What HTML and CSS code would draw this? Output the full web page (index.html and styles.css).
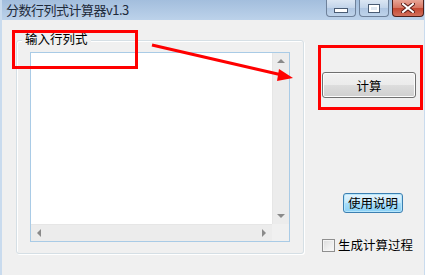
FILE: index.html
```html
<!DOCTYPE html>
<html lang="zh-CN">
<head>
  <meta charset="UTF-8" />
  <title>分数行列式计算器v1.3</title>
  <link rel="stylesheet" href="styles.css">
</head>
<body>
  <div class="window">
    <div class="titlebar">
      <span class="title">分数行列式计算器v1.3</span>
      <div class="caption-btns">
        <span class="cbtn min"><i></i></span>
        <span class="cbtn max"><i></i></span>
        <span class="cbtn close">
          <svg width="14" height="10" viewBox="0 0 14 10">
            <path d="M2 1 L12 9 M12 1 L2 9" stroke="#5a1e18" stroke-width="4" stroke-linecap="square"/>
            <path d="M2 1 L12 9 M12 1 L2 9" stroke="#fff" stroke-width="2" stroke-linecap="square"/>
          </svg>
        </span>
      </div>
    </div>

    <div class="client">
      <div class="group">
        <span class="group-label">输入行列式</span>
        <div class="editbox">
          <div class="edit-area"></div>
          <div class="vscroll">
            <span class="arr up"></span>
            <span class="arr down"></span>
          </div>
          <div class="hscroll">
            <span class="arr left"></span>
            <span class="arr right"></span>
          </div>
          <div class="corner"></div>
        </div>
      </div>

      <div class="side">
        <button class="btn calc">计算</button>
        <button class="btn help">使用说明</button>
        <label class="check"><span class="box"></span>生成计算过程</label>
      </div>
    </div>

    <!-- annotations drawn over the screenshot -->
    <div class="mark mark-input"></div>
    <div class="mark mark-calc"></div>
    <svg class="arrow" width="425" height="275" viewBox="0 0 425 275">
      <line x1="152" y1="45" x2="282" y2="75" stroke="#f00" stroke-width="3"/>
      <polygon points="293,78 279,69 277,81" fill="#f00"/>
    </svg>
  </div>
</body>
</html>
```

FILE: styles.css
```css
* { box-sizing: border-box; }
body { margin: 0; font-family: "Noto Sans CJK SC", "Liberation Sans", sans-serif; font-size: 12px; color: #000; }

.window { position: relative; width: 425px; height: 275px; background: #f0f0f0; border-left: 2px solid #c9dbee; border-right: 1px solid #c9dbee; overflow: hidden; }

.titlebar { height: 20px; display: flex; justify-content: space-between; align-items: flex-start; background: linear-gradient(#a3bedd, #bcd2ea); margin-left: -2px; margin-right: -1px; }
.title { font-size: 13px; line-height: 20px; padding-left: 6px; color: #1e2a3a; letter-spacing: -0.5px; }
.caption-btns { display: flex; gap: 3px; padding-right: 1px; }
.cbtn { width: 30px; height: 17px; border: 1px solid #6e819a; border-top: none; border-radius: 0 0 4px 4px; display: flex; align-items: center; justify-content: center; background: linear-gradient(#dbe6f3, #c2d4ea 50%, #afc6e2 51%, #bed3ea); }
.cbtn.close { width: 32px; border-color: #4c1f1a; background: linear-gradient(#e8a596, #d67461 50%, #c54731 51%, #d2705c); }
.cbtn.min i { width: 14px; height: 5px; background: #fff; border: 1px solid #4a5c74; margin-top: 4px; }
.cbtn.max i { width: 12px; height: 9px; border: 1px solid #4a5c74; background: #dfe7f1; box-shadow: inset 0 0 0 2px #fff; }

.client { display: flex; }

.group { position: relative; margin: 20px 0 0 14px; width: 288px; height: 214px; border: 1px solid #d5dfe5; border-radius: 3px; box-shadow: inset 1px 1px 0 #fff, 1px 1px 0 #fff; padding: 11px 13px 11px 13px; }
.group-label { position: absolute; left: 5px; top: -10px; padding: 0 3px; background: #f0f0f0; line-height: 16px; font-size: 12.5px; }

.editbox { width: 260px; height: 190px; border: 1px solid #a9cbe6; display: grid; grid-template-columns: 1fr 17px; grid-template-rows: 1fr 17px; background: #fff; }
.edit-area { background: #fff; }
.vscroll, .hscroll, .corner { background: #ececec; position: relative; }
.vscroll { border-left: 1px solid #e6e6e6; }
.hscroll { border-top: 1px solid #e6e6e6; }
.corner { background: #f0f0f0; }

.arr { position: absolute; width: 0; height: 0; border: 4px solid transparent; }
.arr.up { top: 6px; left: 4px; border-bottom-color: #8a8a8a; border-top: none; }
.arr.down { bottom: 6px; left: 4px; border-top-color: #8a8a8a; border-bottom: none; }
.arr.left { left: 6px; top: 4px; border-right-color: #8a8a8a; border-left: none; }
.arr.right { right: 6px; top: 4px; border-left-color: #8a8a8a; border-right: none; }

.side { display: flex; flex-direction: column; align-items: flex-start; padding-left: 18px; }
.btn { font-family: inherit; font-size: 12.5px; color: #000; padding: 0; border-radius: 3px; }
.calc { margin-top: 52px; width: 94px; height: 26px; border: 1px solid #707070; background: linear-gradient(#f2f2f2, #ebebeb 50%, #dddddd 51%, #cfcfcf); box-shadow: inset 0 0 0 1px #fcfcfc; }
.help { margin: 95px 0 0 21px; width: 60px; height: 20px; border: 1px solid #3c7fb1; background: linear-gradient(#e5f4fc, #c4e8fb 50%, #a6ddfa 51%, #8bd0f6); box-shadow: inset 0 0 0 1px #b6e6fb; line-height: 16px; }
.check { display: flex; align-items: center; gap: 3px; margin-top: 25px; line-height: 14px; font-size: 12.5px; }
.box { width: 13px; height: 13px; border: 1px solid #8f8f8f; background: linear-gradient(135deg, #dcdcdc, #fbfbfb); box-shadow: inset 0 0 0 1px #f4f4f4; }

.mark { position: absolute; border: 3px solid #f00; }
.mark-input { left: 10px; top: 30px; width: 126px; height: 39px; }
.mark-calc { left: 316px; top: 45px; width: 105px; height: 65px; }
.arrow { position: absolute; left: -2px; top: 0; }
```
